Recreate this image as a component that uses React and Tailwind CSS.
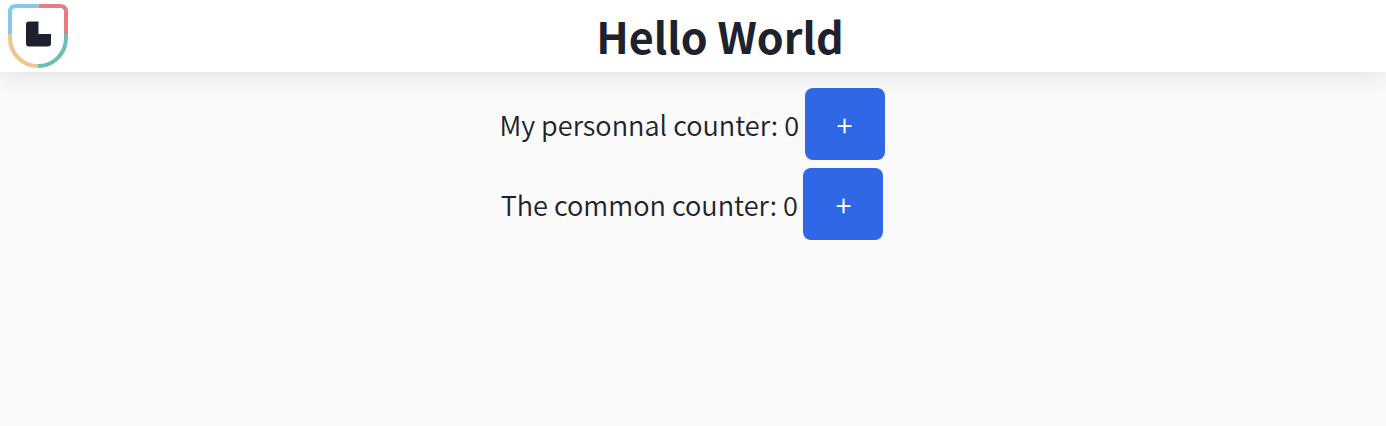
function Logo() {
  return (
    <svg width="60" height="64" viewBox="0 0 60 64" fill="none" className="shrink-0">
      <g strokeWidth="4">
        <path d="M30.500 2H8Q2 2 2 8V30" stroke="#84c8ef" />
        <path d="M30.500 2H52Q58 2 58 8V30" stroke="#e57e84" />
        <path d="M2 30V34A28 28 0 0 0 30 62" stroke="#efc48f" />
        <path d="M58 30V34A28 28 0 0 1 30 62" stroke="#6dbfb3" />
      </g>
      <path d="M21 17.500H30.500V30H43V39.500Q43 42.500 40 42.500H21Q18 42.500 18 39.500V20.500Q18 17.500 21 17.500Z" fill="#1d222c" />
    </svg>
  );
}

function Counter({ label, value }) {
  return (
    <div className="flex h-18 items-center justify-center gap-[5.5px]">
      <span className="pt-[2px] text-[27.1px] font-[350] whitespace-nowrap">{label}: {value}</span>
      <button className="h-18 w-20 rounded-lg bg-[#2f67e6] pt-0.5 text-[29px] font-[350] text-white">+</button>
    </div>
  );
}

export default function App() {
  return (
    <div className="min-h-screen bg-[#fafafa] font-['Noto_Sans_CJK_SC',sans-serif] text-[#1d222c] antialiased">
      <header className="flex h-18 items-center bg-white pr-[14px] pl-2 shadow-[0_4px_24px_rgba(0,0,0,0.10)]">
        <Logo />
        <h1 className="flex-1 pb-[2px] text-center text-[43px] font-bold whitespace-nowrap">Hello World</h1>
      </header>
      <main className="flex flex-col gap-2 pt-4 pr-[2px]">
        <Counter label="My personnal counter" value={0} />
        <Counter label="The common counter" value={0} />
      </main>
    </div>
  );
}
